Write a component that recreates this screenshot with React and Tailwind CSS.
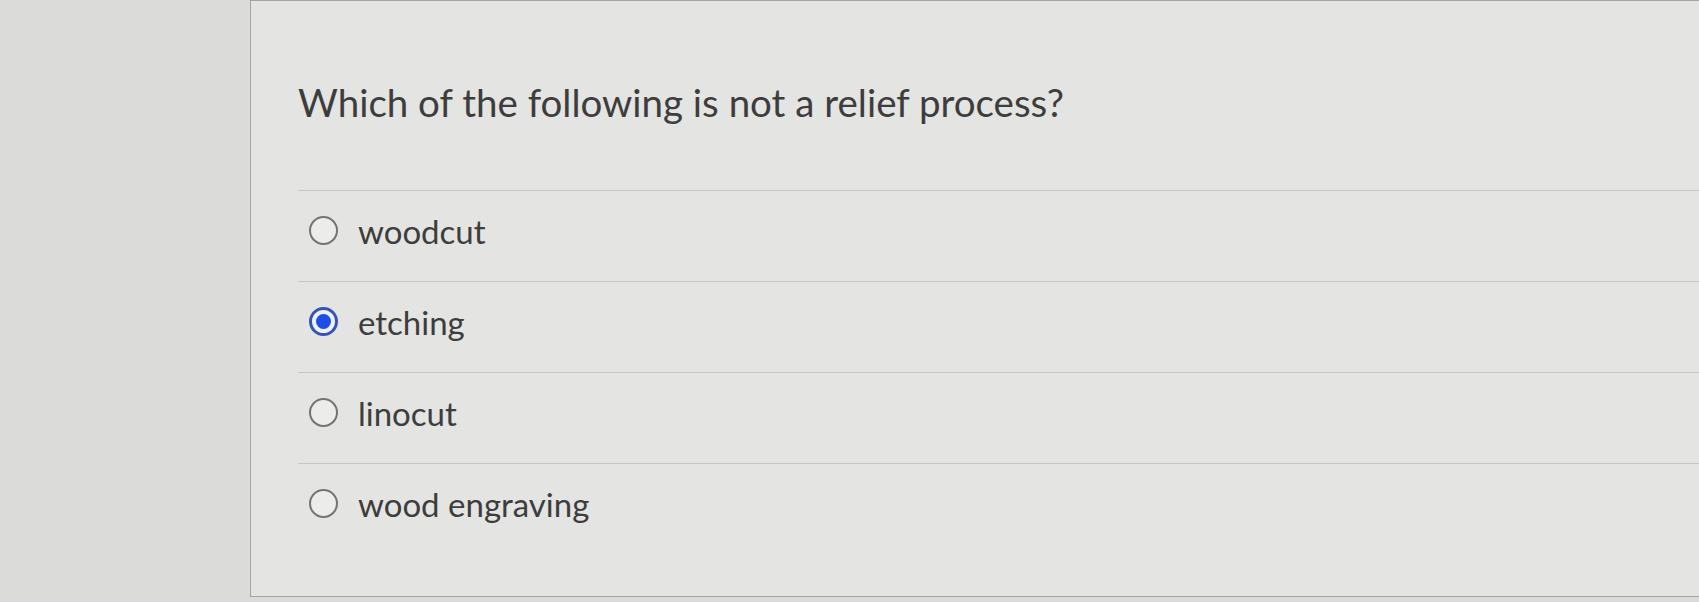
import React, { useState } from 'react';

const options = ['woodcut', 'etching', 'linocut', 'wood engraving'];

const Radio = ({ checked }) => (
  <span
    className={
      checked
        ? 'flex h-[29px] w-[29px] shrink-0 items-center justify-center rounded-full border-[3px] border-[#3553b8] bg-[#f0f1f5]'
        : 'flex h-[29px] w-[29px] shrink-0 items-center justify-center rounded-full border-[2px] border-[#747474] bg-[#ececea]'
    }
  >
    {checked && <span className="h-[15px] w-[15px] rounded-full bg-[#1d4fe8]" />}
  </span>
);

const App = () => {
  const [selected, setSelected] = useState('etching');

  return (
    <div
      className="flex h-[602px] w-full overflow-hidden bg-[#dbdbd9]"
      style={{ fontFamily: 'Lato, "Open Sans", sans-serif' }}
    >
      <div className="w-[250px] shrink-0" />
      <div className="flex-1 border-l border-t border-b border-[#a3a3a1] bg-[#e4e4e2] h-[597px] pl-[47px]">
        <h1 className="pt-[77px] text-[38.5px] leading-[48px] font-normal text-[#3d3d3d]">
          Which of the following is not a relief process?
        </h1>
        <div className="mt-[64px]">
          {options.map((opt) => (
            <label
              key={opt}
              onClick={() => setSelected(opt)}
              className="flex h-[91px] cursor-pointer items-center gap-[20px] border-t border-[#c6c6c4] pb-[11px] pl-[11px]"
            >
              <Radio checked={selected === opt} />
              <span className="text-[33px] leading-[40px] text-[#3d3d3d]">{opt}</span>
            </label>
          ))}
        </div>
      </div>
    </div>
  );
};

export default App;
